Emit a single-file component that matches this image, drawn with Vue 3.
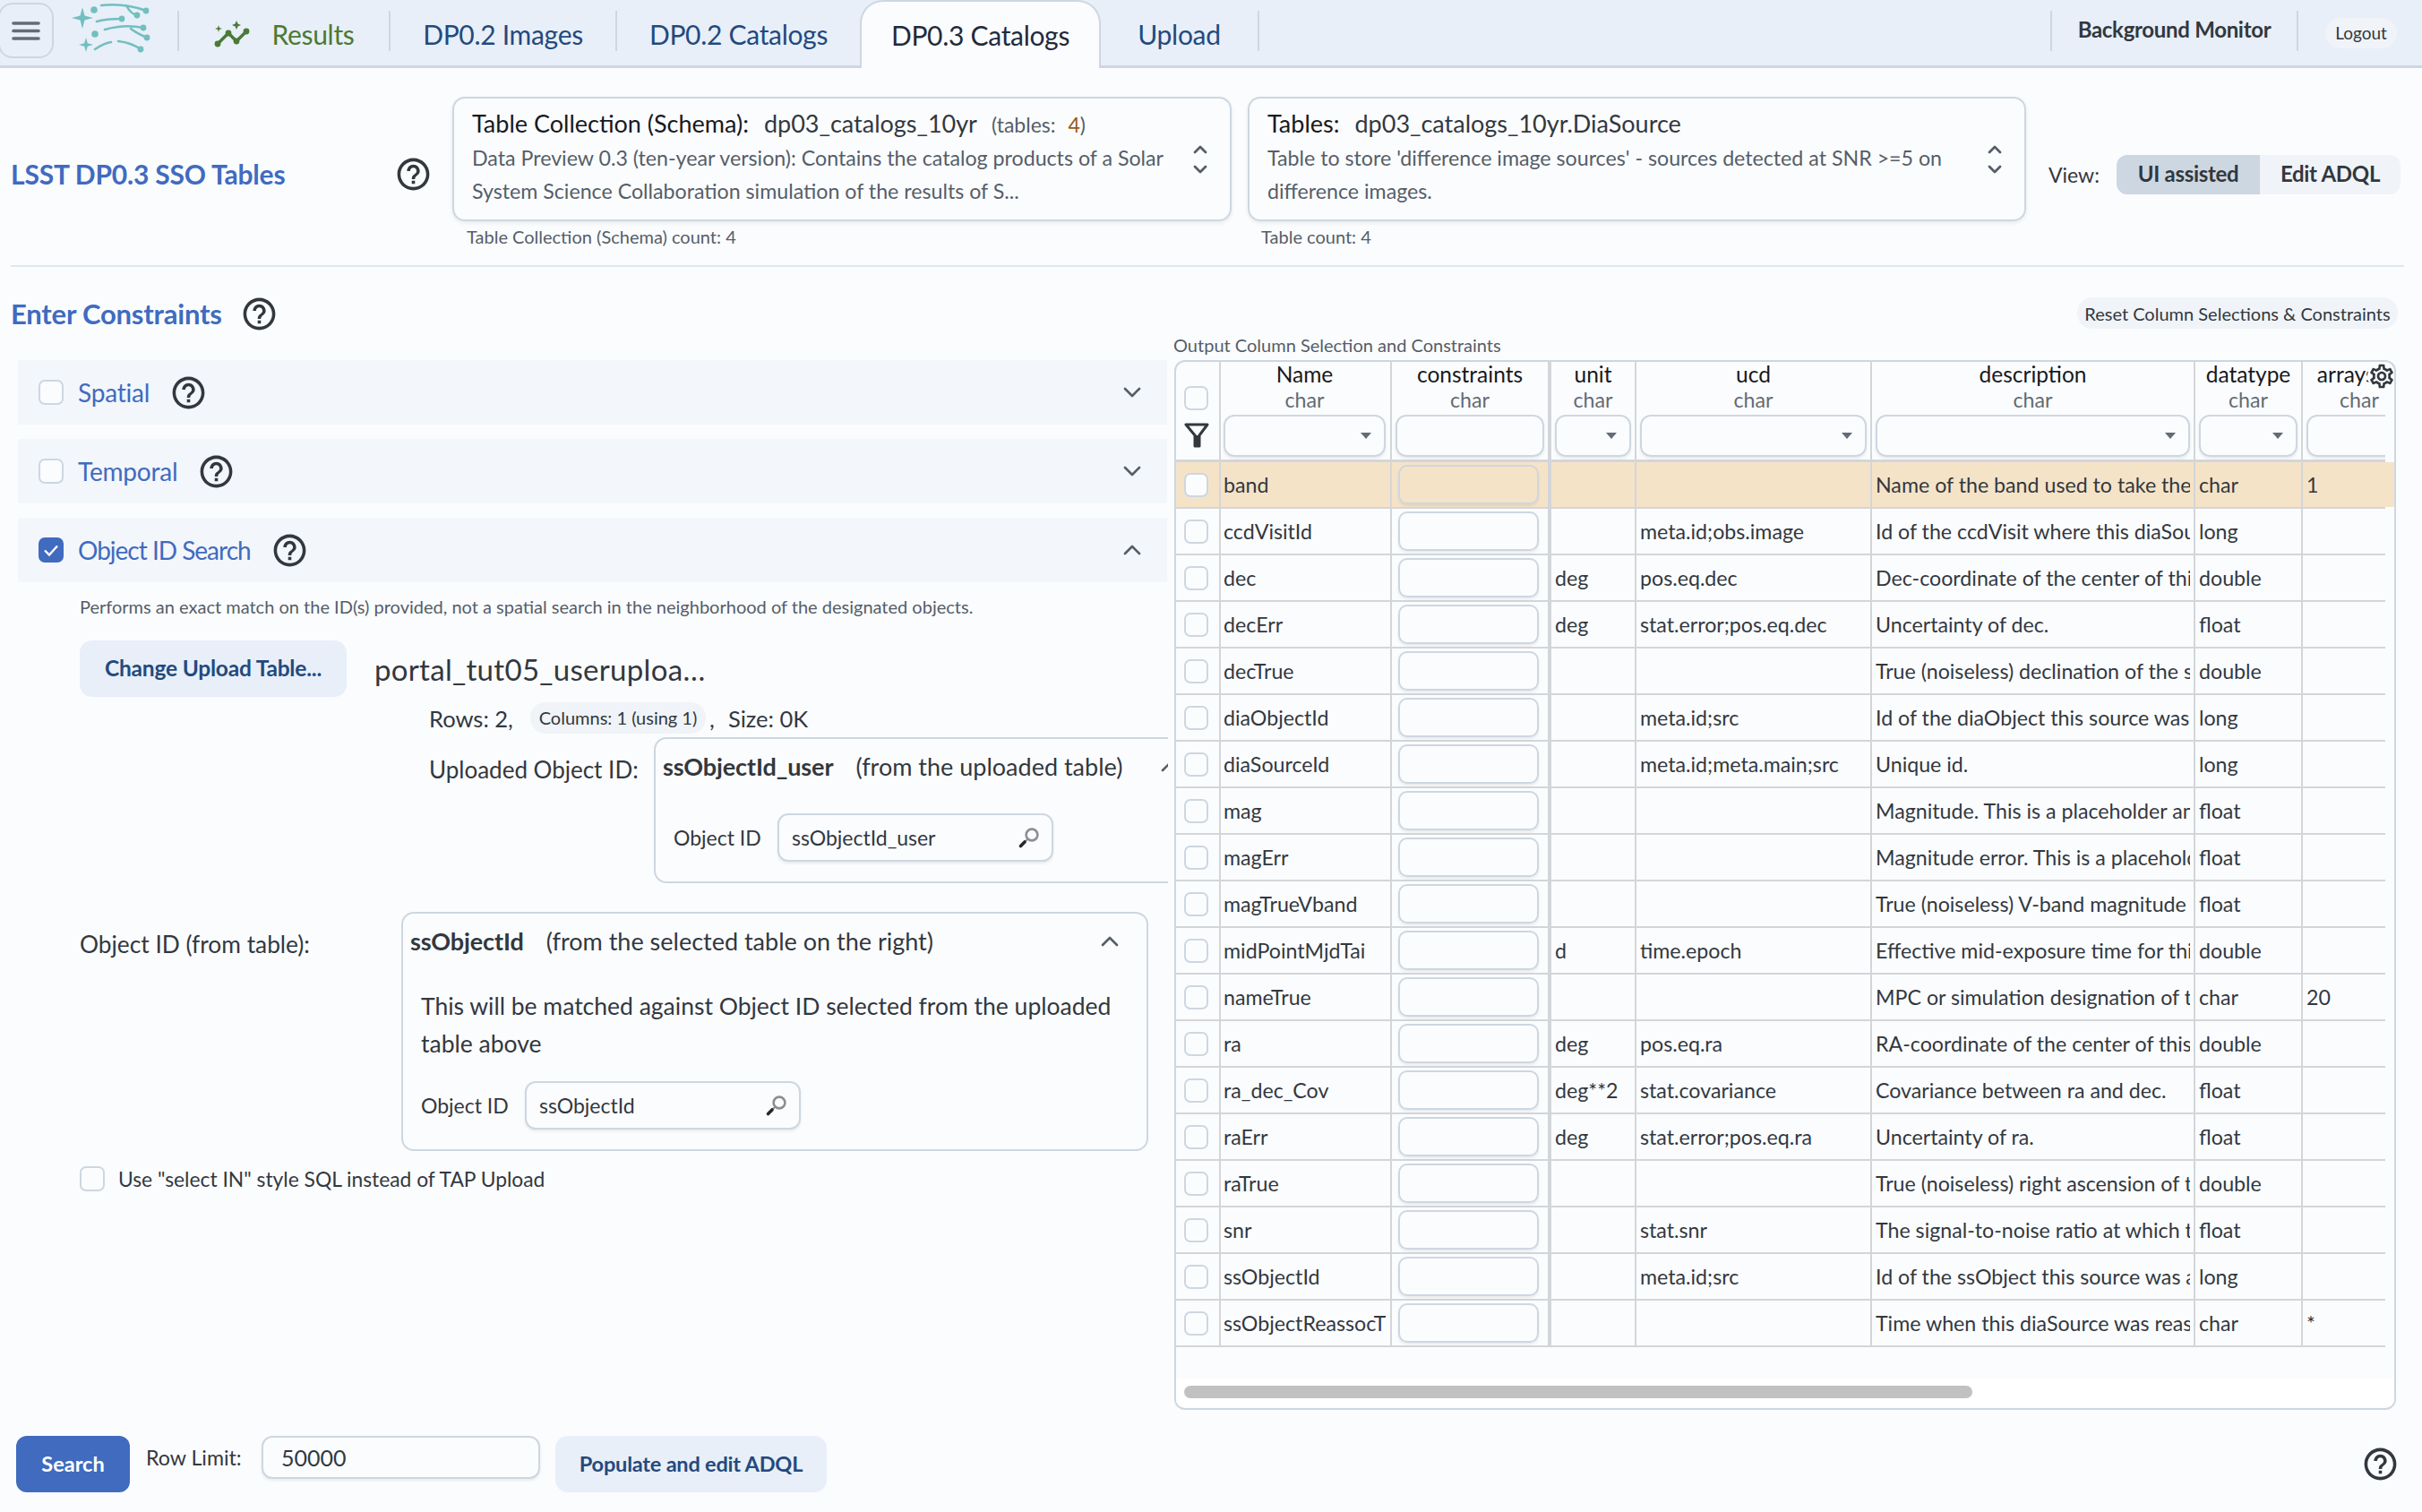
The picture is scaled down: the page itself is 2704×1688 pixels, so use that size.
<template>
  <div class="page">
    <!-- shared icons -->
    <svg class="defs" aria-hidden="true">
      <symbol id="help" viewBox="0 0 24 24">
        <path d="M11 18h2v-2h-2v2zm1-16C6.48 2 2 6.48 2 12s4.48 10 10 10 10-4.48 10-10S17.52 2 12 2zm0 18c-4.41 0-8-3.59-8-8s3.59-8 8-8 8 3.59 8 8-3.59 8-8 8zm0-14c-2.21 0-4 1.79-4 4h2c0-1.1.9-2 2-2s2 .9 2 2c0 2-3 1.75-3 5h2c0-2.25 3-2.5 3-5 0-2.21-1.79-4-4-4z" />
      </symbol>
      <symbol id="updown" viewBox="0 0 20 34">
        <path d="M4 9l6-6 6 6M4 25l6 6 6-6" fill="none" stroke="#555e68" stroke-width="2.8" stroke-linecap="round" stroke-linejoin="round" />
      </symbol>
      <symbol id="chev-down" viewBox="0 0 22 14">
        <path d="M3 3l8 8 8-8" fill="none" stroke="#555e68" stroke-width="2.6" stroke-linecap="round" stroke-linejoin="round" />
      </symbol>
      <symbol id="chev-up" viewBox="0 0 22 14">
        <path d="M3 11l8-8 8 8" fill="none" stroke="#555e68" stroke-width="2.6" stroke-linecap="round" stroke-linejoin="round" />
      </symbol>
      <symbol id="lens" viewBox="0 0 26 26">
        <circle cx="16" cy="10" r="6.4" fill="none" stroke="#8b8f93" stroke-width="2.6" />
        <path d="M11 15l-3 3" stroke="#8b8f93" stroke-width="2" />
        <path d="M8 18l-4.500 4.500" stroke="#25282b" stroke-width="3.600" stroke-linecap="round" />
      </symbol>
    </svg>

    <header class="topbar">
      <button class="menu-btn">
        <svg width="32" height="22" viewBox="0 0 32 22">
          <path d="M2 3h28M2 11.500h28M2 20h28" stroke="#636b74" stroke-width="3.600" stroke-linecap="round" />
        </svg>
      </button>
      <svg class="logo" width="90" height="62" viewBox="80 0 90 62" fill="none" stroke="#72bfc0" stroke-width="2.600" stroke-linecap="round">
        <path d="M92 8l2.500 9.500 9.500 2.500-9.500 2.500-2.500 9.500-2.500-9.500-9.500-2.500 9.500-2.500zM96 42l1.800 6.200 6.200 1.800-6.200 1.800-1.800 6.200-1.800-6.200-6.200-1.800 6.200-1.800z" fill="#72bfc0" stroke="none" />
        <path d="M113 6c18-2 34 0 50 6M141 6c3 6 7 10 12 11M108 24c9-3 18-3 28-3M117 33c14-4 29-5 43-2M146 32c5 4 11 7 18 10M106 55c6-4 12-7 18-8M132 46c10 1 18 4 25 9" />
        <g fill="#72bfc0" stroke="none">
          <circle cx="105" cy="11" r="3.800" /><circle cx="163" cy="12" r="3.400" /><circle cx="153" cy="17" r="3.400" />
          <circle cx="136" cy="21" r="3.400" /><circle cx="106" cy="38" r="3.800" /><circle cx="160" cy="31" r="3.400" />
          <circle cx="164" cy="42" r="3.400" /><circle cx="157" cy="55" r="3.400" />
        </g>
      </svg>
      <span class="sep sep-first"></span>
      <div class="tab tab-results">
        <svg width="42" height="34" viewBox="238 22 42 34">
          <path d="M243 50l12-12 9 9 11-11" fill="none" stroke="#4a7a35" stroke-width="3.500" />
          <g fill="#4a7a35">
            <circle cx="243" cy="50" r="3.400" /><circle cx="255" cy="38" r="3.400" /><circle cx="264" cy="47" r="3.400" /><circle cx="275" cy="36" r="3.400" />
            <path d="M264 24l1.500 3.500 3.500 1.500-3.500 1.500-1.500 3.500-1.500-3.500-3.500-1.500 3.500-1.500zM244 29l.9 3.100 3.100.9-3.100.9-.9 3.100-.9-3.100-3.100-.9 3.100-.9z" />
          </g>
        </svg>
        <span>Results</span>
      </div>
      <span class="sep"></span>
      <div class="tab tab-images">DP0.2 Images</div>
      <span class="sep"></span>
      <div class="tab tab-catalogs">DP0.2 Catalogs</div>
      <div class="tab tab-active">DP0.3 Catalogs</div>
      <div class="tab tab-upload">Upload</div>
      <span class="sep"></span>
      <div class="top-right">
        <span class="sep"></span>
        <span class="monitor">Background Monitor</span>
        <span class="sep"></span>
        <span class="logout">Logout</span>
      </div>
    </header>

    <section class="schema-row">
      <div class="title-wrap">
        <h1 class="page-title">LSST DP0.3 SSO Tables</h1>
        <svg class="help"><use href="#help" /></svg>
      </div>
      <div class="schema-col first">
        <div class="schema-box">
          <div class="schema-text">
            <div class="schema-title">
              Table Collection (Schema):<span class="schema-name">dp03_catalogs_10yr</span><span class="schema-meta">(tables:<b class="num">4</b>)</span>
            </div>
            <div class="schema-desc">
              Data Preview 0.3 (ten-year version): Contains the catalog products of a Solar<br />
              System Science Collaboration simulation of the results of S...
            </div>
          </div>
          <svg class="updown"><use href="#updown" /></svg>
        </div>
        <div class="schema-count">Table Collection (Schema) count: 4</div>
      </div>
      <div class="schema-col second">
        <div class="schema-box">
          <div class="schema-text">
            <div class="schema-title">Tables:<span class="schema-name">dp03_catalogs_10yr.DiaSource</span></div>
            <div class="schema-desc">
              Table to store 'difference image sources' - sources detected at SNR &gt;=5 on<br />
              difference images.
            </div>
          </div>
          <svg class="updown"><use href="#updown" /></svg>
        </div>
        <div class="schema-count">Table count: 4</div>
      </div>
      <div class="view-wrap">
        <span class="view-label">View:</span>
        <div class="toggle">
          <span class="toggle-on">UI assisted</span>
          <span class="toggle-off">Edit ADQL</span>
        </div>
      </div>
    </section>

    <main class="body">
      <div class="left">
        <div class="constraints-head">
          <h2 class="page-title">Enter Constraints</h2>
          <svg class="help"><use href="#help" /></svg>
        </div>

        <div class="acc" :class="{ open: a.checked }" v-for="a in accordions" :key="a.name">
          <span class="check" :class="{ checked: a.checked }">
            <svg v-if="a.checked" width="22" height="22" viewBox="0 0 22 22">
              <path d="M4 11.500l5 5 9-10" fill="none" stroke="#fff" stroke-width="2.400" />
            </svg>
          </span>
          <span class="acc-name">{{ a.name }}</span>
          <svg class="help"><use href="#help" /></svg>
          <svg class="acc-chev"><use :href="a.checked ? '#chev-up' : '#chev-down'" /></svg>
        </div>

        <div class="search-panel">
          <p class="search-desc">Performs an exact match on the ID(s) provided, not a spatial search in the neighborhood of the designated objects.</p>
          <div class="upload-row">
            <button class="soft-btn upload-btn">Change Upload Table...</button>
            <span class="file-name">portal_tut05_useruploa…</span>
          </div>
          <div class="file-info">
            <span class="rows">Rows: 2,</span>
            <span class="chip">Columns: 1 (using 1)</span>
            <span class="comma">,</span>
            <span class="size">Size: 0K</span>
          </div>
          <div class="uploaded-row">
            <span class="field-label">Uploaded Object ID:</span>
            <div class="col-box uploaded-box">
              <div class="col-box-head">
                <b>ssObjectId_user</b><span>(from the uploaded table)</span>
                <svg class="box-chev"><use href="#chev-up" /></svg>
              </div>
              <div class="pick-row">
                <label>Object ID</label>
                <div class="pick-input">
                  <span>ssObjectId_user</span>
                  <svg class="lens"><use href="#lens" /></svg>
                </div>
              </div>
            </div>
          </div>
          <div class="table-row">
            <span class="field-label table-label">Object ID (from table):</span>
            <div class="col-box table-box">
              <div class="col-box-head">
                <b>ssObjectId</b><span>(from the selected table on the right)</span>
                <svg class="box-chev"><use href="#chev-up" /></svg>
              </div>
              <p class="match-note">This will be matched against Object ID selected from the uploaded<br />table above</p>
              <div class="pick-row">
                <label>Object ID</label>
                <div class="pick-input">
                  <span>ssObjectId</span>
                  <svg class="lens"><use href="#lens" /></svg>
                </div>
              </div>
            </div>
          </div>
          <div class="select-in">
            <span class="check"></span>
            <span>Use "select IN" style SQL instead of TAP Upload</span>
          </div>
        </div>
      </div>

      <div class="right">
        <div class="reset-row"><button class="reset-btn">Reset Column Selections &amp; Constraints</button></div>
        <div class="grid-caption">Output Column Selection and Constraints</div>
        <div class="grid-box">
          <svg class="gear" viewBox="0 0 24 24">
            <path d="M19.43 12.98c.04-.32.07-.64.07-.98 0-.34-.03-.66-.07-.98l2.11-1.65c.19-.15.24-.42.12-.64l-2-3.46c-.09-.16-.26-.25-.44-.25-.06 0-.12.01-.17.03l-2.49 1c-.52-.4-1.08-.73-1.69-.98l-.38-2.65C14.46 2.18 14.25 2 14 2h-4c-.25 0-.46.18-.49.42l-.38 2.65c-.61.25-1.17.59-1.69.98l-2.49-1c-.06-.02-.12-.03-.18-.03-.17 0-.34.09-.43.25l-2 3.46c-.13.22-.07.49.12.64l2.11 1.65c-.04.32-.07.65-.07.98 0 .33.03.66.07.98l-2.11 1.65c-.19.15-.24.42-.12.64l2 3.46c.09.16.26.25.44.25.06 0 .12-.01.17-.03l2.49-1c.52.4 1.08.73 1.69.98l.38 2.65c.03.24.24.42.49.42h4c.25 0 .46-.18.49-.42l.38-2.65c.61-.25 1.17-.59 1.69-.98l2.49 1c.06.02.12.03.18.03.17 0 .34-.09.43-.25l2-3.46c.12-.22.07-.49-.12-.64l-2.11-1.65zm-1.98-1.71c.04.31.05.52.05.73 0 .21-.02.43-.05.73l-.14 1.13.89.7 1.08.84-.7 1.21-1.27-.51-1.04-.42-.9.68c-.43.32-.84.56-1.25.73l-1.06.43-.16 1.13-.2 1.35h-1.4l-.19-1.35-.16-1.13-1.06-.43c-.43-.18-.83-.41-1.23-.71l-.91-.7-1.06.43-1.27.51-.7-1.21 1.08-.84.89-.7-.14-1.13c-.03-.31-.05-.54-.05-.74s.02-.43.05-.73l.14-1.13-.89-.7-1.08-.84.7-1.21 1.27.51 1.04.42.9-.68c.43-.32.84-.56 1.25-.73l1.06-.43.16-1.13.2-1.35h1.39l.19 1.35.16 1.13 1.06.43c.43.18.83.41 1.23.71l.91.7 1.06-.43 1.27-.51.7 1.21-1.07.85-.89.7.14 1.13zM12 8c-2.21 0-4 1.79-4 4s1.79 4 4 4 4-1.79 4-4-1.79-4-4-4zm0 6c-1.1 0-2-.9-2-2s.9-2 2-2 2 .9 2 2-.9 2-2 2z" />
          </svg>
          <div class="grid-main">
            <div class="grid-scroll">
              <table class="grid">
                <colgroup>
                  <col v-for="w in colWidths" :key="w.k" :style="{ width: w.w + 'px' }" />
                </colgroup>
                <thead>
                  <tr>
                    <th class="sel-head">
                      <span class="check"></span>
                      <svg class="funnel" width="28" height="28" viewBox="0 0 28 28">
                        <path d="M2 2h24L17 14v12h-5V14z" fill="none" stroke="#32383e" stroke-width="3" stroke-linejoin="round" />
                        <path d="M12 14h4.500v12H12z" fill="#32383e" />
                      </svg>
                    </th>
                    <th v-for="c in headers" :key="c.name" :class="{ thick: c.name === 'constraints' }">
                      <div class="col-name">{{ c.name }}</div>
                      <div class="col-type">char</div>
                      <div class="filter" :class="{ 'has-arrow': c.arrow }"></div>
                    </th>
                  </tr>
                </thead>
                <tbody>
                  <tr v-for="(r, i) in rows" :key="r[0]" :class="{ hilite: i === 0 }">
                    <td class="sel"><span class="check"></span></td>
                    <td><div class="cell">{{ r[0] }}</div></td>
                    <td class="thick"><div class="constraint"></div></td>
                    <td><div class="cell">{{ r[1] }}</div></td>
                    <td><div class="cell">{{ r[2] }}</div></td>
                    <td><div class="cell">{{ r[3] }}</div></td>
                    <td><div class="cell">{{ r[4] }}</div></td>
                    <td><div class="cell">{{ r[5] }}</div></td>
                  </tr>
                </tbody>
              </table>
            </div>
            <div class="gutter"><div class="gutter-band"></div></div>
          </div>
          <div class="hscroll"><div class="hscroll-thumb"></div></div>
        </div>
      </div>
    </main>

    <footer class="bottom">
      <button class="search-btn">Search</button>
      <span class="limit-label">Row Limit:</span>
      <input class="limit-input" value="50000" readonly />
      <button class="soft-btn populate-btn">Populate and edit ADQL</button>
      <svg class="help bottom-help"><use href="#help" /></svg>
    </footer>
  </div>
</template>

<script setup>
const accordions = [
  { name: 'Spatial', checked: false },
  { name: 'Temporal', checked: false },
  { name: 'Object ID Search', checked: true },
]

const colWidths = [
  { k: 'sel', w: 50 },
  { k: 'name', w: 191 },
  { k: 'constraints', w: 178 },
  { k: 'unit', w: 95 },
  { k: 'ucd', w: 263 },
  { k: 'description', w: 361 },
  { k: 'datatype', w: 120 },
  { k: 'arraysize', w: 128 },
]

const headers = [
  { name: 'Name', arrow: true },
  { name: 'constraints', arrow: false },
  { name: 'unit', arrow: true },
  { name: 'ucd', arrow: true },
  { name: 'description', arrow: true },
  { name: 'datatype', arrow: true },
  { name: 'arraysize', arrow: true },
]

// name, unit, ucd, description, datatype, arraysize
const rows = [
  ['band', '', '', 'Name of the band used to take the exposure where this source was measured', 'char', '1'],
  ['ccdVisitId', '', 'meta.id;obs.image', 'Id of the ccdVisit where this diaSource was measured', 'long', ''],
  ['dec', 'deg', 'pos.eq.dec', 'Dec-coordinate of the center of this diaSource', 'double', ''],
  ['decErr', 'deg', 'stat.error;pos.eq.dec', 'Uncertainty of dec.', 'float', ''],
  ['decTrue', '', '', 'True (noiseless) declination of the source', 'double', ''],
  ['diaObjectId', '', 'meta.id;src', 'Id of the diaObject this source was associated with', 'long', ''],
  ['diaSourceId', '', 'meta.id;meta.main;src', 'Unique id.', 'long', ''],
  ['mag', '', '', 'Magnitude. This is a placeholder and should be replaced', 'float', ''],
  ['magErr', '', '', 'Magnitude error. This is a placeholder and should be replaced', 'float', ''],
  ['magTrueVband', '', '', 'True (noiseless) V-band magnitude of the source', 'float', ''],
  ['midPointMjdTai', 'd', 'time.epoch', 'Effective mid-exposure time for this diaSource', 'double', ''],
  ['nameTrue', '', '', 'MPC or simulation designation of the object', 'char', '20'],
  ['ra', 'deg', 'pos.eq.ra', 'RA-coordinate of the center of this diaSource', 'double', ''],
  ['ra_dec_Cov', 'deg**2', 'stat.covariance', 'Covariance between ra and dec.', 'float', ''],
  ['raErr', 'deg', 'stat.error;pos.eq.ra', 'Uncertainty of ra.', 'float', ''],
  ['raTrue', '', '', 'True (noiseless) right ascension of the source', 'double', ''],
  ['snr', '', 'stat.snr', 'The signal-to-noise ratio at which this source was detected', 'float', ''],
  ['ssObjectId', '', 'meta.id;src', 'Id of the ssObject this source was associated with', 'long', ''],
  ['ssObjectReassocTime', '', '', 'Time when this diaSource was reassociated', 'char', '*'],
]
</script>

<style>
html,
body {
  margin: 0;
  background: #fbfcfe;
}
</style>

<style scoped>
.page {
  width: 2704px;
  height: 1688px;
  overflow: hidden;
  display: flex;
  flex-direction: column;
  background: #fbfcfe;
  color: #32383e;
  font-family: Lato, 'Noto Sans', sans-serif;
  font-size: 24px;
}
.defs {
  width: 0;
  height: 0;
  position: absolute;
}
button {
  font-family: inherit;
  border: 0;
  cursor: pointer;
}
h1,
h2,
p {
  margin: 0;
}

/* top bar */
.topbar {
  height: 76px;
  flex: none;
  display: flex;
  align-items: center;
  box-sizing: border-box;
  background: #e8eff8;
  border-bottom: 3px solid #cdd7e1;
}
.menu-btn {
  width: 62px;
  height: 62px;
  margin: 0 0 5px -2px;
  padding: 0;
  display: flex;
  align-items: center;
  justify-content: center;
  background: #e8eff8;
  border: 2px solid #cdd7e1;
  border-radius: 16px;
}
.logo {
  margin: 0 28px 11px 20px;
  flex: none;
}
.sep {
  width: 2px;
  height: 45px;
  flex: none;
  background: #cdd7e1;
  margin-bottom: 4px;
}
.tab {
  height: 76px;
  box-sizing: border-box;
  display: flex;
  align-items: center;
  justify-content: center;
  font-size: 30px;
  color: #234a7e;
  padding-top: 3px;
  letter-spacing: -0.3px;
}
.tab-results {
  width: 234px;
  gap: 23px;
  color: #4a7a35;
}
.tab-images {
  width: 251px;
}
.tab-catalogs {
  width: 271px;
}
.tab-active {
  width: 269px;
  color: #1f2b3d;
  background: #fbfcfe;
  border: 2px solid #cdd7e1;
  border-bottom: 0;
  border-radius: 26px 26px 0 0;
  padding-top: 0;
  position: relative;
  top: 1px;
}
.tab-upload {
  width: 175px;
}
.top-right {
  margin-left: auto;
  display: flex;
  align-items: center;
}
.monitor {
  width: 273px;
  text-align: center;
  font-weight: 700;
  font-size: 24px;
  padding-bottom: 8px;
  letter-spacing: -0.3px;
}
.logout {
  width: 80px;
  height: 34px;
  margin: 0 28px 0 30px;
  display: flex;
  align-items: center;
  justify-content: center;
  background: #f0f4f8;
  border-radius: 17px;
  font-size: 19px;
}

/* schema row */
.schema-row {
  height: 222px;
  flex: none;
  box-sizing: border-box;
  display: flex;
  padding-top: 32px;
  margin: 0 20px 0 12px;
  border-bottom: 2px solid #dde7ee;
}
.title-wrap {
  width: 493px;
  height: 172px;
  flex: none;
  box-sizing: border-box;
  padding: 0 22px 0 0;
  display: flex;
  align-items: center;
  justify-content: space-between;
}
.page-title {
  font-size: 30px;
  font-weight: 700;
  color: #406bbf;
  letter-spacing: -0.2px;
}
.help {
  width: 43px;
  height: 43px;
  flex: none;
  fill: #32383e;
}
.schema-col {
  flex: none;
}
.schema-col.first {
  width: 870px;
}
.schema-col.second {
  width: 869px;
  margin-left: 18px;
}
.schema-box {
  height: 139px;
  box-sizing: border-box;
  display: flex;
  align-items: center;
  border: 2px solid #cdd7e1;
  border-radius: 14px;
  box-shadow: 0 2px 4px rgba(21, 21, 21, 0.08);
  padding: 10px 23px 10px 20px;
}
.schema-text {
  flex: 1;
  align-self: flex-start;
}
.schema-title {
  height: 36px;
  line-height: 36px;
  font-size: 27px;
  color: #171a1c;
  white-space: nowrap;
}
.schema-name {
  margin-left: 17px;
  color: #32383e;
}
.schema-meta {
  margin-left: 16px;
  font-size: 23px;
  color: #555e68;
}
.num {
  font-weight: 400;
  color: #9a5b13;
  margin-left: 14px;
}
.schema-desc {
  margin-top: 2px;
  line-height: 37px;
  font-size: 23.2px;
  color: #555e68;
  white-space: nowrap;
}
.updown {
  width: 20px;
  height: 34px;
  flex: none;
}
.schema-count {
  margin: 5px 0 0 16px;
  font-size: 20px;
  line-height: 24px;
  color: #555e68;
}
.second .schema-count {
  margin-left: 15px;
}
.view-wrap {
  height: 174px;
  margin-left: 25px;
  display: flex;
  align-items: center;
}
.view-label {
  width: 76px;
  font-size: 23px;
}
.toggle {
  display: flex;
  height: 44px;
  line-height: 42px;
  font-weight: 700;
  font-size: 24px;
  letter-spacing: -0.3px;
  text-align: center;
}
.toggle-on {
  width: 160px;
  background: #cdd7e1;
  border-radius: 12px 0 0 12px;
}
.toggle-off {
  width: 157px;
  background: #f0f4f8;
  border-radius: 0 12px 12px 0;
}

/* body */
.body {
  height: 1292px;
  flex: none;
  display: flex;
  gap: 6px;
}
.left {
  width: 1304px;
  flex: none;
  box-sizing: border-box;
  padding-left: 13px;
  overflow: hidden;
}
.constraints-head {
  height: 40px;
  margin-top: 32px;
  margin-bottom: 32px;
  margin-left: -1px;
  display: flex;
  align-items: center;
  gap: 20px;
}
.constraints-head .page-title {
  font-size: 31px;
}
.acc {
  height: 72px;
  margin: 0 1px 16px 7px;
  padding-left: 23px;
  display: flex;
  align-items: center;
  background: #f3f6fb;
}
.check {
  width: 28px;
  height: 28px;
  flex: none;
  box-sizing: border-box;
  display: inline-block;
  border: 2px solid #cdd7e1;
  border-radius: 7px;
  background: #fbfcfe;
}
.check.checked {
  background: #406bbf;
  border-color: #406bbf;
  padding: 1px;
}
.check svg {
  display: block;
}
.acc-name {
  margin-left: 16px;
  margin-right: 22px;
  font-size: 28px;
  color: #406bbf;
  letter-spacing: -0.2px;
}
.acc.open .acc-name {
  letter-spacing: -1px;
}
.acc-chev {
  width: 22px;
  height: 14px;
  margin-left: auto;
  margin-right: 28px;
}
.search-panel {
  margin: -4px 0 0 76px;
}
.search-desc {
  height: 30px;
  line-height: 30px;
  font-size: 20px;
  color: #555e68;
  white-space: nowrap;
}
.upload-row {
  margin-top: 23px;
  display: flex;
  align-items: center;
}
.soft-btn {
  background: #e8eff8;
  border-radius: 14px;
  font-weight: 700;
  color: #234a7e;
  font-size: 23.5px;
  letter-spacing: -0.2px;
  padding: 0 0 2px;
}
.upload-btn {
  width: 298px;
  height: 63px;
  font-size: 24.5px;
}
.file-name {
  margin-left: 31px;
  font-size: 33px;
  letter-spacing: 0.3px;
  white-space: nowrap;
}
.file-info {
  height: 35px;
  margin: 6px 0 0 390px;
  display: flex;
  align-items: center;
  font-size: 25.500px;
}
.rows {
  width: 113px;
}
.chip {
  width: 196px;
  height: 35px;
  line-height: 35px;
  text-align: center;
  border-radius: 17px;
  background: #f0f4f8;
  font-size: 20px;
}
.comma {
  margin-left: 4px;
  width: 21px;
}
.uploaded-row {
  display: flex;
  align-items: flex-start;
  margin: 4px 0 0 390px;
}
.field-label {
  font-size: 26px;
  line-height: 36px;
  padding-top: 18px;
  white-space: nowrap;
  flex: none;
}
.col-box {
  box-sizing: border-box;
  flex: none;
  border: 2px solid #cdd7e1;
  border-radius: 14px;
}
.uploaded-box {
  width: 609px;
  height: 163px;
}
.uploaded-row .field-label {
  width: 251px;
}
.col-box-head {
  height: 61px;
  padding-left: 8px;
  display: flex;
  align-items: center;
  font-size: 27px;
  white-space: nowrap;
}
.col-box-head b {
  margin-right: 25px;
  font-weight: 700;
  letter-spacing: -0.1px;
}
.box-chev {
  width: 22px;
  height: 14px;
  margin-left: auto;
  margin-right: 30px;
}
.uploaded-box .box-chev {
  margin-right: 20px;
}
.pick-row {
  display: flex;
  align-items: center;
  margin: 22px 0 0 20px;
}
.pick-row label {
  width: 116px;
  font-size: 23px;
}
.pick-input {
  width: 308px;
  height: 54px;
  box-sizing: border-box;
  padding: 0 12px 0 14px;
  display: flex;
  align-items: center;
  justify-content: space-between;
  border: 2px solid #cdd7e1;
  border-radius: 12px;
  background: #fbfcfe;
  box-shadow: 0 2px 3px rgba(21, 21, 21, 0.08);
  font-size: 23px;
}
.lens {
  width: 26px;
  height: 26px;
}
.table-row {
  display: flex;
  margin-top: 32px;
}
.table-label {
  width: 359px;
  padding-top: 18px;
  font-size: 26.3px;
}
.table-box {
  width: 834px;
  height: 267px;
}
.match-note {
  margin: 21px 10px 0 20px;
  font-size: 26.5px;
  line-height: 42px;
  white-space: nowrap;
}
.table-box .pick-row {
  margin-top: 21px;
}
.select-in {
  margin-top: 17px;
  display: flex;
  align-items: center;
  gap: 15px;
  font-size: 22.8px;
}

/* right column */
.right {
  flex: 1;
  min-width: 0;
}
.reset-row {
  display: flex;
  justify-content: flex-end;
  margin: 34px 27px 6px 0;
}
.reset-btn {
  width: 358px;
  height: 35px;
  padding: 0;
  border-radius: 17px;
  background: #f0f4f8;
  color: #32383e;
  font-size: 20px;
}
.grid-caption {
  height: 26px;
  line-height: 25px;
  font-size: 20px;
  color: #555e68;
}
.grid-box {
  position: relative;
  width: 1364px;
  height: 1172px;
  margin: 3px 0 0 1px;
  box-sizing: border-box;
  border: 2px solid #cdd7e1;
  border-radius: 12px;
  overflow: hidden;
  display: flex;
  flex-direction: column;
}
.gear {
  position: absolute;
  right: -2px;
  top: 0;
  width: 32px;
  height: 32px;
  fill: #32383e;
  background: #fbfcfe;
  border-radius: 50%;
}
.grid-main {
  flex: 1;
  min-height: 0;
  display: flex;
}
.grid-scroll {
  flex: 1;
  min-width: 0;
  overflow: hidden;
}
.gutter {
  width: 10px;
  flex: none;
}
.gutter-band {
  height: 50px;
  margin-top: 112px;
  background: #f5e3c8;
}
.grid {
  table-layout: fixed;
  width: 1386px;
  border-collapse: separate;
  border-spacing: 0;
}
.grid th {
  height: 112px;
  padding: 0 4px;
  box-sizing: border-box;
  vertical-align: top;
  font-weight: 400;
  border-right: 2px solid #d3d6d9;
  border-bottom: 3px solid #d3d6d9;
}
.grid td {
  height: 52px;
  box-sizing: border-box;
  padding: 0 4px;
  border-right: 2px solid #d3d6d9;
  border-bottom: 2px solid #d3d6d9;
  font-size: 23.2px;
}
.grid th:nth-child(2),
.grid td:nth-child(2) {
  padding-left: 3px;
  padding-right: 5px;
}
.grid .thick {
  border-right-width: 4px;
}
.hilite td {
  background: #f5e3c8;
}
.hilite .check {
  background: #fbfcfe;
}
.sel,
.sel-head {
  text-align: center;
  padding: 0 !important;
}
.sel .check {
  display: block;
  width: 27px;
  height: 27px;
  margin: 0 0 0 9px;
}
.sel-head .check {
  display: block;
  width: 27px;
  height: 27px;
  margin: 27px 0 0 9px;
}
.funnel {
  display: block;
  margin: 14px 0 0 9px;
}
.col-name {
  height: 30px;
  line-height: 27px;
  text-align: center;
  font-size: 24.5px;
  color: #171a1c;
  white-space: nowrap;
  overflow: hidden;
}
.col-type {
  height: 29px;
  line-height: 25px;
  text-align: center;
  font-size: 23.2px;
  color: #636b74;
}
.filter {
  position: relative;
  height: 47px;
  box-sizing: border-box;
  border: 2px solid #cdd7e1;
  border-radius: 12px;
  box-shadow: 0 2px 3px rgba(21, 21, 21, 0.08);
}
.has-arrow::after {
  content: '';
  position: absolute;
  right: 14px;
  top: 18px;
  border-left: 6px solid transparent;
  border-right: 6px solid transparent;
  border-top: 7px solid #636b74;
}
.cell {
  overflow: hidden;
  white-space: nowrap;
  line-height: 30px;
}
.constraint {
  height: 44px;
  box-sizing: border-box;
  margin: 0 6px 0 3px;
  border: 2px solid #cdd7e1;
  border-radius: 10px;
  box-shadow: 0 2px 3px rgba(21, 21, 21, 0.08);
}
.hscroll {
  height: 31px;
  flex: none;
  margin: 0 0 2px;
  padding-top: 8px;
  box-sizing: border-box;
  background: #fff;
}
.hscroll-thumb {
  width: 880px;
  height: 14px;
  margin-left: 9px;
  border-radius: 7px;
  background: #c1c1c1;
}

/* footer */
.bottom {
  height: 98px;
  flex: none;
  box-sizing: border-box;
  padding: 13px 0 0 18px;
  display: flex;
  align-items: flex-start;
}
.search-btn {
  width: 127px;
  height: 63px;
  padding: 0 0 2px;
  border-radius: 12px;
  background: #406bbf;
  color: #fff;
  font-weight: 700;
  font-size: 23.5px;
}
.limit-label {
  margin-left: 18px;
  width: 129px;
  line-height: 48px;
  font-size: 23.2px;
}
.limit-input {
  width: 311px;
  height: 48px;
  box-sizing: border-box;
  padding: 0 20px;
  border: 2px solid #cdd7e1;
  border-radius: 12px;
  background: #fbfcfe;
  box-shadow: 0 2px 3px rgba(21, 21, 21, 0.08);
  color: #32383e;
  font-family: inherit;
  font-size: 25px;
  outline: none;
}
.populate-btn {
  width: 303px;
  height: 63px;
  margin-left: 17px;
}
.bottom-help {
  margin: 10px 25px 0 auto;
}
</style>
